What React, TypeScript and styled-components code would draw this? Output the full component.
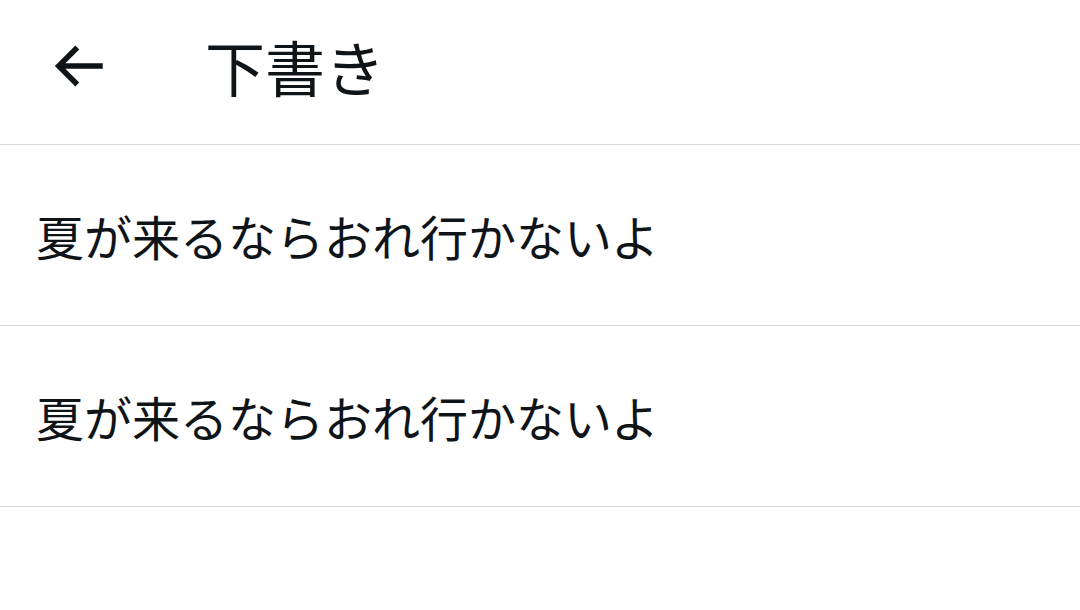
import React from 'react'
import styled, { createGlobalStyle } from 'styled-components'

const GlobalStyle = createGlobalStyle`
  html, body {
    margin: 0;
    padding: 0;
    background: #ffffff;
  }
  body {
    font-family: "Noto Sans CJK JP", "Noto Sans", sans-serif;
    color: #0f1419;
  }
`

const Page = styled.div`
  display: flex;
  flex-direction: column;
  width: 100vw;
  min-height: 100vh;
  background: #ffffff;
`

const Header = styled.header`
  display: flex;
  flex-direction: row;
  align-items: center;
  height: 132px;
  padding: 0 0 12px 45px;
  border-bottom: 1px solid #d6d9db;
`

const BackButton = styled.button`
  display: flex;
  align-items: center;
  justify-content: center;
  width: 66px;
  height: 66px;
  padding: 0;
  margin: 0 94px 0 0;
  border: none;
  background: transparent;
  color: #0f1419;
  cursor: pointer;
`

const Title = styled.h1`
  margin: 0;
  font-size: 60px;
  font-weight: 400;
  line-height: 1;
  letter-spacing: 0;
`

const DraftList = styled.ul`
  display: flex;
  flex-direction: column;
  margin: 0;
  padding: 0;
  list-style: none;
`

const DraftRow = styled.li`
  display: flex;
  align-items: center;
  height: 180px;
  padding-left: 36px;
  border-bottom: 1px solid #d6d9db;
  font-size: 48px;
  line-height: 1;
`

const BackArrow = () => (
  <svg viewBox="0 0 24 24" width="66" height="66" fill="currentColor">
    <path d="M7.414 13l5.043 5.04-1.414 1.42L3.586 12l7.457-7.46 1.414 1.42L7.414 11H21v2H7.414z" />
  </svg>
)

const drafts = ['夏が来るならおれ行かないよ', '夏が来るならおれ行かないよ']

function App() {
  return (
    <>
      <GlobalStyle />
      <Page>
        <Header>
          <BackButton aria-label="戻る">
            <BackArrow />
          </BackButton>
          <Title>下書き</Title>
        </Header>
        <DraftList>
          {drafts.map((text, index) => (
            <DraftRow key={index}>{text}</DraftRow>
          ))}
        </DraftList>
      </Page>
    </>
  )
}

export default App
